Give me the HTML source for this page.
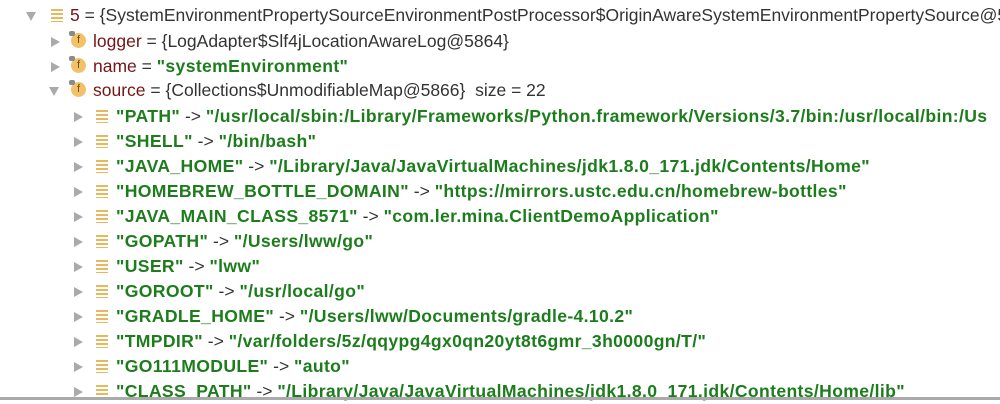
<html><head><style>
body{margin:0;width:1000px;height:400px;overflow:hidden;background:#fff;font-family:"Liberation Sans",sans-serif;font-size:17.5px;color:#333}
.r{position:absolute;left:0;height:25px;line-height:25px;white-space:nowrap}
.t{position:absolute;top:8px;width:0;height:0}
.tr{border-left:9px solid #aaa;border-top:5px solid transparent;border-bottom:5px solid transparent}
.td{border-top:9px solid #aaa;border-left:5px solid transparent;border-right:5px solid transparent;top:9px}
.lst{position:absolute;top:6px;width:12px;height:13px;background:repeating-linear-gradient(#e8b860 0 2px,#fff 2px 4px)}
.f{position:absolute;top:4px;width:15px;height:15px;border-radius:50%;background:#f2c26b;font-size:11px;line-height:15px;text-align:center;color:#7a4a00}
.f:before{content:"";position:absolute;left:-2px;top:-2px;width:6px;height:5px;background:#8a8a8a;border-radius:2px}
.x{position:absolute;top:0}
.g{color:#1d7d1d;font-weight:bold;font-size:17.6px;letter-spacing:0.35px}
.n{color:#751515}
</style></head><body>
<div class="r" style="top:3px"><div class="t td" style="left:26px"></div><div class="lst" style="left:51px"></div><div class="x" style="left:70px"><span class="n">5</span> = {SystemEnvironmentPropertySourceEnvironmentPostProcessor$OriginAwareSystemEnvironmentPropertySource@55</div></div>
<div class="r" style="top:29px"><div class="t tr" style="left:51px"></div><div class="f" style="left:71px">f</div><div class="x" style="left:93px"><span class="n">logger</span> = {LogAdapter$Slf4jLocationAwareLog@5864}</div></div>
<div class="r" style="top:54px"><div class="t tr" style="left:51px"></div><div class="f" style="left:71px">f</div><div class="x" style="left:93px"><span class="n">name</span> = <span class="g">"systemEnvironment"</span></div></div>
<div class="r" style="top:78px"><div class="t td" style="left:49px"></div><div class="f" style="left:71px">f</div><div class="x" style="left:93px"><span class="n">source</span> = {Collections$UnmodifiableMap@5866}&nbsp; size = 22</div></div>
<div class="r" style="top:104px"><div class="t tr" style="left:74px"></div><div class="lst" style="left:96px"></div><div class="x" style="left:116px"><span class="g">"PATH"</span> -&gt; <span class="g">"/usr/local/sbin:/Library/Frameworks/Python.framework/Versions/3.7/bin:/usr/local/bin:/Us</span></div></div>
<div class="r" style="top:129px"><div class="t tr" style="left:74px"></div><div class="lst" style="left:96px"></div><div class="x" style="left:116px"><span class="g">"SHELL"</span> -&gt; <span class="g">"/bin/bash"</span></div></div>
<div class="r" style="top:154px"><div class="t tr" style="left:74px"></div><div class="lst" style="left:96px"></div><div class="x" style="left:116px"><span class="g">"JAVA_HOME"</span> -&gt; <span class="g">"/Library/Java/JavaVirtualMachines/jdk1.8.0_171.jdk/Contents/Home"</span></div></div>
<div class="r" style="top:179px"><div class="t tr" style="left:74px"></div><div class="lst" style="left:96px"></div><div class="x" style="left:116px"><span class="g">"HOMEBREW_BOTTLE_DOMAIN"</span> -&gt; <span class="g">"https://mirrors.ustc.edu.cn/homebrew-bottles"</span></div></div>
<div class="r" style="top:204px"><div class="t tr" style="left:74px"></div><div class="lst" style="left:96px"></div><div class="x" style="left:116px"><span class="g">"JAVA_MAIN_CLASS_8571"</span> -&gt; <span class="g">"com.ler.mina.ClientDemoApplication"</span></div></div>
<div class="r" style="top:229px"><div class="t tr" style="left:74px"></div><div class="lst" style="left:96px"></div><div class="x" style="left:116px"><span class="g">"GOPATH"</span> -&gt; <span class="g">"/Users/lww/go"</span></div></div>
<div class="r" style="top:254px"><div class="t tr" style="left:74px"></div><div class="lst" style="left:96px"></div><div class="x" style="left:116px"><span class="g">"USER"</span> -&gt; <span class="g">"lww"</span></div></div>
<div class="r" style="top:279px"><div class="t tr" style="left:74px"></div><div class="lst" style="left:96px"></div><div class="x" style="left:116px"><span class="g">"GOROOT"</span> -&gt; <span class="g">"/usr/local/go"</span></div></div>
<div class="r" style="top:304px"><div class="t tr" style="left:74px"></div><div class="lst" style="left:96px"></div><div class="x" style="left:116px"><span class="g">"GRADLE_HOME"</span> -&gt; <span class="g">"/Users/lww/Documents/gradle-4.10.2"</span></div></div>
<div class="r" style="top:329px"><div class="t tr" style="left:74px"></div><div class="lst" style="left:96px"></div><div class="x" style="left:116px"><span class="g">"TMPDIR"</span> -&gt; <span class="g">"/var/folders/5z/qqypg4gx0qn20yt8t6gmr_3h0000gn/T/"</span></div></div>
<div class="r" style="top:354px"><div class="t tr" style="left:74px"></div><div class="lst" style="left:96px"></div><div class="x" style="left:116px"><span class="g">"GO111MODULE"</span> -&gt; <span class="g">"auto"</span></div></div>
<div class="r" style="top:379px"><div class="t tr" style="left:74px"></div><div class="lst" style="left:96px"></div><div class="x" style="left:116px"><span class="g">"CLASS_PATH"</span> -&gt; <span class="g">"/Library/Java/JavaVirtualMachines/jdk1.8.0_171.jdk/Contents/Home/lib"</span></div></div>
<div style="position:absolute;left:0;top:397px;width:1000px;height:3px;background:#aaa"></div>
</body></html>
